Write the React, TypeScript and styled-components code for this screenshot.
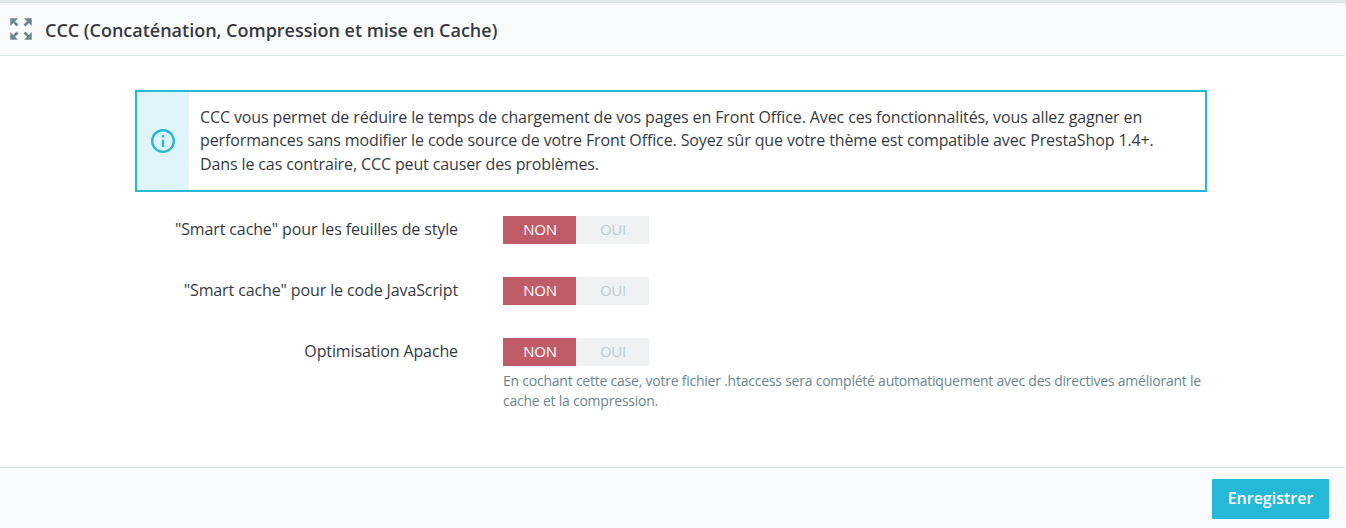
import React from "react";
import styled, { createGlobalStyle } from "styled-components";

const GlobalStyle = createGlobalStyle`
  *, *::before, *::after { box-sizing: border-box; }
  body { margin: 0; background: #e4e7e8; font-family: "Open Sans", sans-serif; color: #363a41; }
`;

const Card = styled.section`
  display: flex;
  flex-direction: column;
  width: 1346px;
  height: 526px;
  margin-top: 2px;
  border-top: 1px solid #dbe6e9;
  border-right: 1px solid #f9fafb;
  border-top-right-radius: 5px;
  background: #fff;
  overflow: hidden;
`;

const CardHeader = styled.header`
  display: flex;
  align-items: center;
  gap: 13px;
  height: 53px;
  padding-left: 10px;
  border-bottom: 1px solid #dbe6e9;
  background: #fafbfc;
`;

const ExpandIcon = styled.svg`
  width: 22px;
  height: 22px;
  margin-top: -1px;
  fill: #6c868e;
  stroke: #6c868e;
  stroke-width: 0.4;
`;

const Title = styled.h3`
  margin: 2px 0 0;
  font-size: 18px;
  line-height: 24px;
  font-weight: 600;
  letter-spacing: -0.01px;
`;

const CardBody = styled.div`
  flex: 1;
  padding: 34px 138px 0 135px;
`;

const Notice = styled.div`
  display: flex;
  height: 102px;
  border: 2px solid #25b9d7;
`;

const NoticeAside = styled.div`
  display: flex;
  align-items: center;
  justify-content: center;
  width: 52px;
  background: #dff5f9;
`;

const NoticeText = styled.p`
  flex: 1;
  margin: 0;
  padding: 13.85px 0 0 11px;
  font-size: 16px;
  line-height: 23.4px;
  letter-spacing: -0.119px;
  white-space: nowrap;
`;

const Row = styled.div<{ $top: number }>`
  display: flex;
  gap: 45px;
  margin-top: ${(p) => p.$top}px;
`;

const Label = styled.span`
  flex: none;
  width: 323px;
  text-align: right;
  font-size: 16px;
  line-height: 26px;
  letter-spacing: -0.12px;
`;

const Switch = styled.div`
  display: flex;
  width: 146px;
  height: 28px;
`;

const Option = styled.span<{ $on?: boolean }>`
  flex: 1;
  padding-left: 1px;
  text-align: center;
  font-size: 15px;
  line-height: 27px;
  letter-spacing: -0.2px;
  font-weight: ${(p) => (p.$on ? 500 : 400)};
  color: ${(p) => (p.$on ? "#fff" : "#bbcdd2")};
  background: ${(p) => (p.$on ? "#c05c67" : "#eff1f2")};
`;

const Help = styled.p`
  margin: 5px 0 0;
  font-size: 14px;
  line-height: 20px;
  letter-spacing: -0.23px;
  color: #6c868e;
  white-space: nowrap;
`;

const CardFooter = styled.footer`
  display: flex;
  justify-content: flex-end;
  height: 61px;
  padding: 11px 16px 0 0;
  border-top: 1px solid #dbe6e9;
  background: #fafbfc;
`;

const SaveButton = styled.button`
  width: 117px;
  height: 40px;
  padding: 0 0 2px;
  border: 0;
  border-radius: 1px;
  background: #25b9d7;
  color: #fff;
  font: 600 16px "Open Sans", sans-serif;
`;

function Toggle() {
  return (
    <Switch>
      <Option $on>NON</Option>
      <Option>OUI</Option>
    </Switch>
  );
}

export default function App() {
  return (
    <>
      <GlobalStyle />
      <Card>
        <CardHeader>
          <ExpandIcon viewBox="2.6 2.6 18.8 18.8">
            <path d="M15 3l2.3 2.3-2.89 2.87 1.42 1.42L18.7 6.7 21 9V3zM3 9l2.3-2.3 2.87 2.89 1.42-1.42L6.7 5.3 9 3H3zm6 12l-2.3-2.3 2.89-2.87-1.42-1.42L5.3 17.3 3 15v6zm12-6l-2.3 2.3-2.87-2.89-1.42 1.42 2.89 2.87L15 21h6z" />
          </ExpandIcon>
          <Title>CCC (Concaténation, Compression et mise en Cache)</Title>
        </CardHeader>
        <CardBody>
          <Notice>
            <NoticeAside>
              <svg width="24" height="24" viewBox="2 2 20 20" fill="#25b9d7">
                <path d="M11 17h2v-6h-2v6zm1-15C6.48 2 2 6.48 2 12s4.48 10 10 10 10-4.48 10-10S17.52 2 12 2zm0 18c-4.41 0-8-3.59-8-8s3.59-8 8-8 8 3.59 8 8-3.59 8-8 8zM11 9h2V7h-2v2z" />
              </svg>
            </NoticeAside>
            <NoticeText>
              CCC vous permet de réduire le temps de chargement de vos pages en Front Office. Avec ces fonctionnalités, vous allez gagner en
              <br />
              performances sans modifier le code source de votre Front Office. Soyez sûr que votre thème est compatible avec PrestaShop 1.4+.
              <br />
              Dans le cas contraire, CCC peut causer des problèmes.
            </NoticeText>
          </Notice>
          <Row $top={24}>
            <Label>"Smart cache" pour les feuilles de style</Label>
            <Toggle />
          </Row>
          <Row $top={33}>
            <Label>"Smart cache" pour le code JavaScript</Label>
            <Toggle />
          </Row>
          <Row $top={33}>
            <Label>Optimisation Apache</Label>
            <div>
              <Toggle />
              <Help>
                En cochant cette case, votre fichier .htaccess sera complété automatiquement avec des directives améliorant le
                <br />
                cache et la compression.
              </Help>
            </div>
          </Row>
        </CardBody>
        <CardFooter>
          <SaveButton type="button">Enregistrer</SaveButton>
        </CardFooter>
      </Card>
    </>
  );
}
